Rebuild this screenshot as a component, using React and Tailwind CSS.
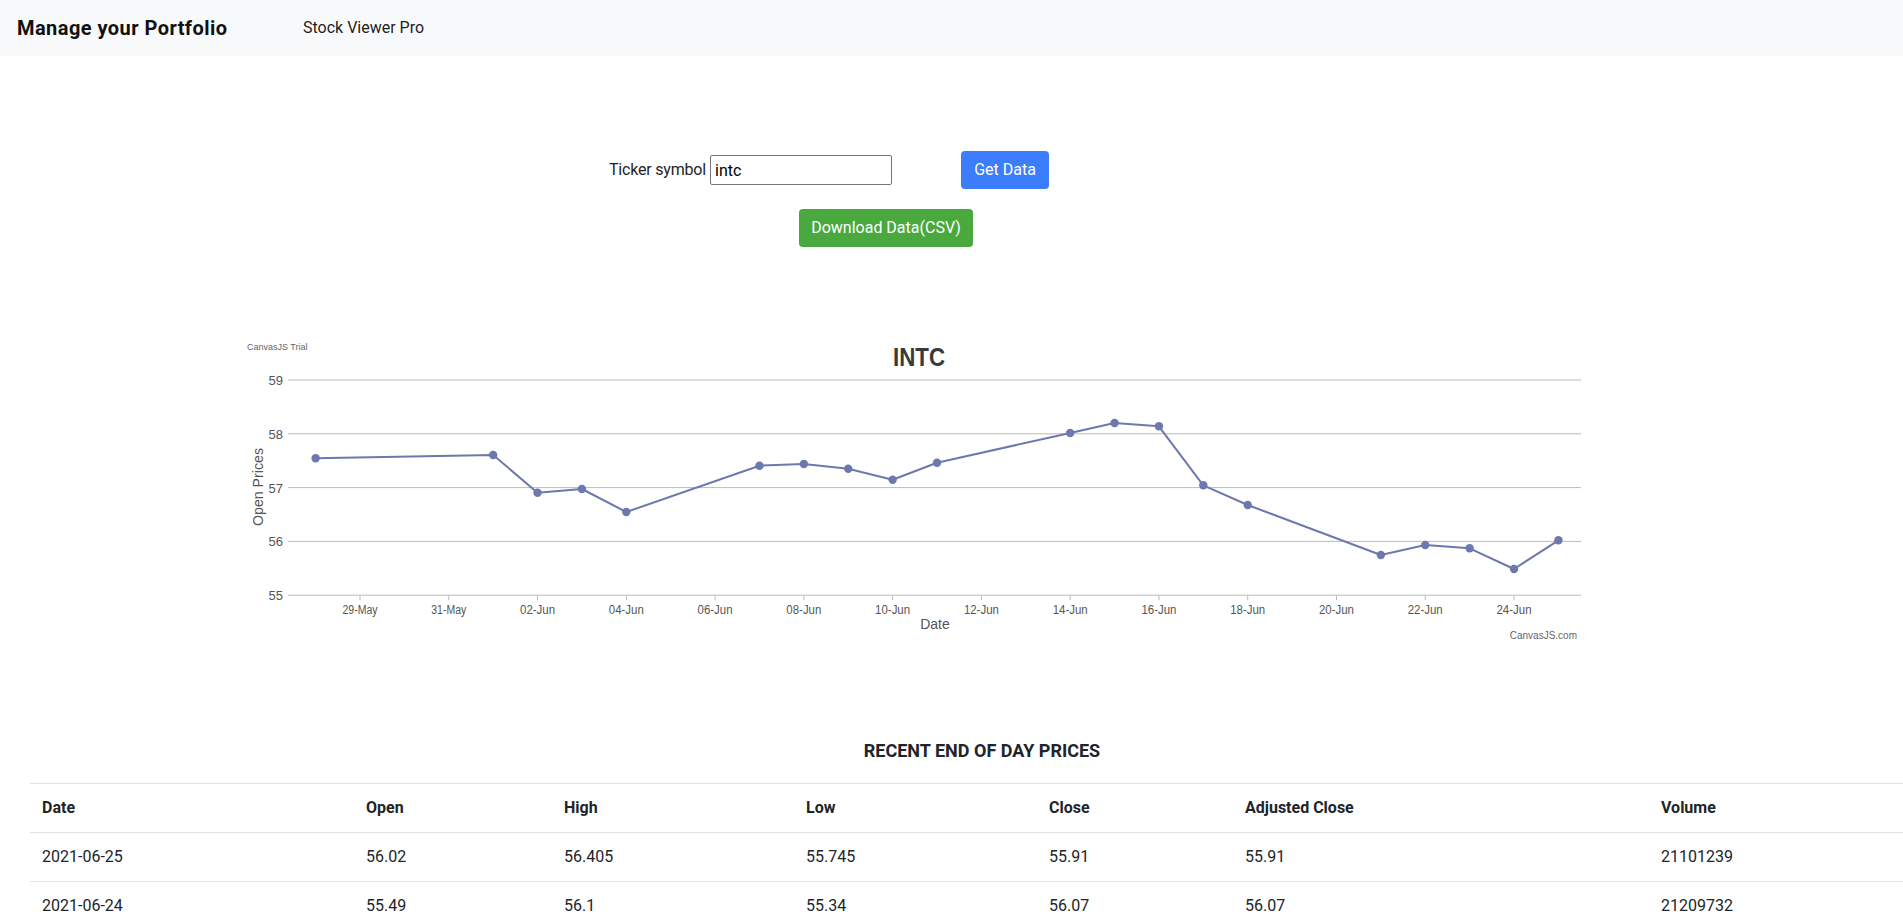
import React from "react";

const data = [
  [-1, 57.545], [3, 57.606], [4, 56.905], [5, 56.974], [6, 56.546],
  [9, 57.407], [10, 57.439], [11, 57.351], [12, 57.147], [13, 57.463],
  [16, 58.015], [17, 58.2], [18, 58.14], [19, 57.043], [20, 56.677],
  [23, 55.747], [24, 55.933], [25, 55.872], [26, 55.487], [27, 56.02],
];
const ticks = [
  "29-May", "31-May", "02-Jun", "04-Jun", "06-Jun", "08-Jun", "10-Jun",
  "12-Jun", "14-Jun", "16-Jun", "18-Jun", "20-Jun", "22-Jun", "24-Jun",
];
const X = (n) => 120 + 44.385 * n;
const Y = (v) => 40 + (59 - v) * 53.8;

const rows = [
  ["2021-06-25", "56.02", "56.405", "55.745", "55.91", "55.91", "21101239"],
  ["2021-06-24", "55.49", "56.1", "55.34", "56.07", "56.07", "21209732"],
];
const cols = [
  ["Date", "w-[324px]"],
  ["Open", "w-[198px]"],
  ["High", "w-[242px]"],
  ["Low", "w-[243px]"],
  ["Close", "w-[196px]"],
  ["Adjusted Close", "w-[416px]"],
  ["Volume", "w-[285px]"],
];

function Chart() {
  const font = "'Liberation Sans', Arial, sans-serif";
  const pts = data.map(([n, v]) => `${X(n).toFixed(1)},${Y(v).toFixed(1)}`).join(" ");
  return (
    <svg width="1360" height="300" viewBox="0 0 1360 300" className="block">
      <text x="7" y="10" fontSize="9" fill="#666" fontFamily={font}>CanvasJS Trial</text>
      <text x="679" y="26" fontSize="26" fontWeight="600" fill="#3a3a3a" textAnchor="middle" fontFamily={font} textLength="52" lengthAdjust="spacingAndGlyphs">INTC</text>
      {[59, 58, 57, 56, 55].map((v) => (
        <g key={v}>
          <line x1="48" x2="1341" y1={Y(v)} y2={Y(v)} stroke="#bbbbbb" strokeWidth="1" />
          <text x="43" y={Y(v) + 5} fontSize="13" fill="#555" textAnchor="end" fontFamily={font}>{v}</text>
        </g>
      ))}
      {ticks.map((t, i) => (
        <g key={t}>
          <line x1={X(i * 2)} x2={X(i * 2)} y1={Y(55)} y2={Y(55) + 5} stroke="#bbbbbb" strokeWidth="1" />
          <text x={X(i * 2)} y="273.5" fontSize="12" fill="#555" textAnchor="middle" fontFamily={font} textLength="35" lengthAdjust="spacingAndGlyphs">{t}</text>
        </g>
      ))}
      <text transform="translate(23,147) rotate(-90)" fontSize="14" fill="#555" textAnchor="middle" fontFamily={font} textLength="78" lengthAdjust="spacingAndGlyphs">Open Prices</text>
      <text x="695" y="289" fontSize="14" fill="#555" textAnchor="middle" fontFamily={font}>Date</text>
      <text x="1337" y="300" fontSize="10" fill="#666" textAnchor="end" fontFamily={font} dy="-1">CanvasJS.com</text>
      <polyline points={pts} fill="none" stroke="#6d78ad" strokeWidth="2" strokeLinejoin="round" />
      {data.map(([n, v]) => (
        <circle key={n} cx={X(n)} cy={Y(v)} r="4.2" fill="#6d78ad" />
      ))}
    </svg>
  );
}

export default function App() {
  return (
    <div className="w-full h-[918px] overflow-hidden bg-white text-[#212529] font-['Roboto',sans-serif]">
      <nav className="h-14 bg-[#f8f9fa] flex items-center">
        <span className="ml-[17px] w-[286px] text-[20px] font-bold tracking-[0.45px] text-[#111]">Manage your Portfolio</span>
        <span className="text-[16px] text-black/90">Stock Viewer Pro</span>
      </nav>

      <div className="mt-[95px] ml-[609px] flex items-center h-[38px]">
        <label className="w-[101px] whitespace-nowrap text-[16px] tracking-[-0.2px] text-[#212529]">Ticker symbol</label>
        <input
          defaultValue="intc"
          className="w-[182px] h-[30px] border border-[#767676] rounded-[2px] px-[4px] text-[16px] text-black outline-none"
        />
        <button className="ml-[69px] w-[88px] h-[38px] rounded-[4px] bg-[#3b7dfb] text-white text-[16px]">Get Data</button>
      </div>
      <div className="mt-[20px] ml-[799px]">
        <button className="w-[174px] h-[38px] rounded-[4px] bg-[#49a83e] text-white text-[16px]">Download Data(CSV)</button>
      </div>

      <div className="mt-[93px] ml-[240px]">
        <Chart />
      </div>

      <div className="ml-[30px] w-[1904px]">
        <div className="mt-[97px] h-[27px] leading-[27px] text-center text-[18px] font-bold text-[#212529]">RECENT END OF DAY PRICES</div>
        <table className="mt-[19px] w-full border-collapse text-[16px] leading-6">
          <thead>
            <tr className="border-t border-[#dee2e6]">
              {cols.map(([c, w]) => (
                <th key={c} className={`${w} p-3 text-left font-bold`}>{c}</th>
              ))}
            </tr>
          </thead>
          <tbody>
            {rows.map((r) => (
              <tr key={r[0]} className="border-t border-[#dee2e6]">
                {r.map((c, i) => (
                  <td key={i} className="p-3 text-left">{c}</td>
                ))}
              </tr>
            ))}
          </tbody>
        </table>
      </div>
    </div>
  );
}
